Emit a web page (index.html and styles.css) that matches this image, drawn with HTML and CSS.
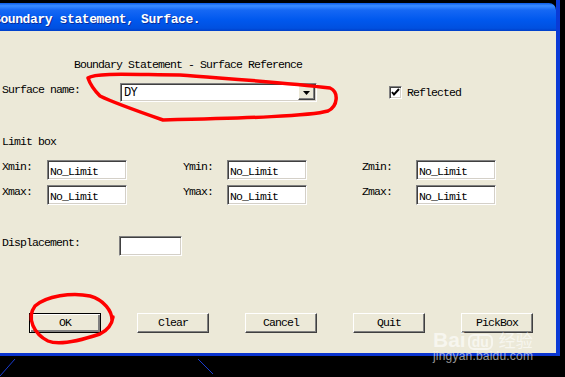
FILE: index.html
```html
<!DOCTYPE html>
<html lang="en">
<head>
    <meta charset="UTF-8">
    <meta name="viewport" content="width=device-width, initial-scale=1.0">
    <title>Boundary statement, Surface.</title>
    <link rel="stylesheet" href="styles.css">
</head>
<body>
    <div class="window">
        <div class="titlebar"><span class="title">Boundary statement, Surface.</span></div>

        <div class="dialog">
            <div class="heading">Boundary Statement - Surface Reference</div>

            <div class="surface-row">
                <span class="label surface-label">Surface name:</span>
                <div class="combo">
                    <span class="combo-text">DY</span>
                    <span class="combo-btn">
                        <svg width="7" height="4" viewBox="0 0 7 4"><path d="M0 0h7L3.5 4z" fill="#000"/></svg>
                    </span>
                </div>
                <div class="check">
                    <span class="check-box">
                        <svg width="9" height="9" viewBox="0 0 9 9"><path d="M1 4l2 2.5L8 1" fill="none" stroke="#000" stroke-width="2"/></svg>
                    </span>
                    <span>Reflected</span>
                </div>
            </div>

            <div class="section-label">Limit box</div>

            <div class="limits">
                <span class="label">Xmin:</span>
                <div class="field">No_Limit</div>
                <span class="label mid">Ymin:</span>
                <div class="field">No_Limit</div>
                <span class="label far">Zmin:</span>
                <div class="field">No_Limit</div>

                <span class="label">Xmax:</span>
                <div class="field">No_Limit</div>
                <span class="label mid">Ymax:</span>
                <div class="field">No_Limit</div>
                <span class="label far">Zmax:</span>
                <div class="field">No_Limit</div>
            </div>

            <div class="disp-row">
                <span class="label disp-label">Displacement:</span>
                <div class="field small"></div>
            </div>

            <div class="buttons">
                <div class="btn default">OK</div>
                <div class="btn">Clear</div>
                <div class="btn">Cancel</div>
                <div class="btn">Quit</div>
                <div class="btn">PickBox</div>
            </div>
        </div>
    </div>

    <!-- pen marks and desktop bits drawn over the capture -->
    <svg class="marks" width="565" height="377" viewBox="0 0 565 377">
        <path d="M198 359L213 374M0 376L15 359" stroke="#1a3cd0" stroke-width="1" fill="none"/>
        <path d="M88 78C96 72 140 75 180 75C230 79 282 82 330 88C339 92 338 106 328 111C310 116 250 118 163 120C140 112 112 102 100 96C94 90 90 84 88 78Z"
              fill="none" stroke="#ff0000" stroke-width="3.5" stroke-linejoin="round"/>
        <path d="M112 320C112 311 104 300 90 296C72 292 46 296 35 306C26 318 34 334 48 341C60 346 82 340 100 334C108 330 112 324 113 317"
              fill="none" stroke="#ff0000" stroke-width="3.5" stroke-linecap="round"/>
    </svg>

    <div class="watermark">
        <div class="wm-top"><span class="wm-bai">Bai</span><span class="wm-paw">du</span><span class="wm-cn">经验</span></div>
        <div class="wm-url">jingyan.baidu.com</div>
    </div>
</body>
</html>
```

FILE: styles.css
```css
body { margin: 0; background: #000; width: 565px; height: 377px; overflow: hidden; position: relative; }

.window { width: 556px; padding-top: 3px; border-right: 4px solid #0a3ad6; }
.titlebar {
    height: 28px; overflow: hidden; border-top-right-radius: 7px;
    background: linear-gradient(#0b5be6 0%, #3b8cff 10%, #1668f4 25%, #0058ee 60%, #0050e0 90%, #003ec8 100%);
}
.title {
    display: block; margin-left: -7px; padding-top: 6px;
    font: bold 13px/22px "Liberation Mono", monospace; letter-spacing: -0.4px;
    color: #fff; white-space: nowrap; text-shadow: 1px 1px 0 #0a2c9a;
}

.dialog {
    background: #ece9d8; height: 325px; box-sizing: border-box;
    padding: 27px 0 0 2px; border-bottom: 3px solid #0a34d0;
    font: 11.5px/13px "Liberation Mono", monospace; letter-spacing: -0.9px; color: #000;
    display: flex; flex-direction: column; align-items: flex-start;
}

.heading { margin-left: 72px; white-space: nowrap; }

.surface-row { display: flex; align-items: center; margin-top: 12px; }
.surface-label { width: 118px; align-self: flex-start; }
.combo {
    width: 197px; height: 19px; box-sizing: border-box; display: flex; background: #fff;
    border: 1px solid; border-color: #808080 #fff #fff #808080;
    box-shadow: inset 1px 1px #404040, inset -1px -1px #d4d0c8;
    padding: 1px;
}
.combo-text { flex: 1; padding: 2px 0 0 2px; font-size: 12px; letter-spacing: -0.8px; }
.combo-btn {
    width: 17px; display: flex; align-items: center; justify-content: center; background: #ece9d8;
    box-sizing: border-box; border: 1px solid; border-color: #fff #404040 #404040 #fff;
    box-shadow: inset -1px -1px #808080;
}
.check { display: flex; align-items: center; gap: 5px; margin-left: 72px; }
.check-box {
    width: 13px; height: 13px; box-sizing: border-box; background: #fff;
    display: flex; align-items: center; justify-content: center;
    border: 1px solid; border-color: #808080 #fff #fff #808080;
    box-shadow: inset 1px 1px #404040, inset -1px -1px #d4d0c8;
}

.section-label { margin-top: 33px; }

.limits {
    display: grid; margin-top: 12px; row-gap: 5px;
    grid-template-columns: 45px 80px 56px 44px 80px 55px 54px 80px;
    grid-auto-rows: 20px;
}
.label { white-space: nowrap; }
.mid { grid-column-start: 4; }
.far { grid-column-start: 7; }
.field {
    height: 20px; box-sizing: border-box; background: #fff; padding: 4px 0 0 2px;
    border: 1px solid; border-color: #808080 #fff #fff #808080;
    box-shadow: inset 1px 1px #404040, inset -1px -1px #d4d0c8;
    white-space: nowrap;
}
.field.small { width: 63px; }

.disp-row { display: flex; margin-top: 31px; }
.disp-label { width: 117px; }

.buttons { display: flex; gap: 36px; margin-top: 57px; margin-left: 27px; }
.btn {
    width: 72px; height: 20px; box-sizing: border-box; text-align: center; line-height: 18px;
    background: #ece9d8; border: 1px solid; border-color: #fff #404040 #404040 #fff;
    box-shadow: inset -1px -1px #808080;
}
.btn.default { border-color: #000; box-shadow: inset 1px 1px #fff, inset -2px -2px #808080; }

.marks { position: absolute; left: 0; top: 0; pointer-events: none; }

.watermark { position: absolute; left: 433px; top: 327px; color: rgba(255, 255, 255, 0.6); font-family: "Liberation Sans", sans-serif; }
.wm-top { display: flex; align-items: baseline; gap: 2px; }
.wm-bai { font-size: 21px; font-weight: bold; }
.wm-paw { font-size: 14px; font-weight: bold; padding: 0 2px; border-radius: 6px; border: 2px solid rgba(255, 255, 255, 0.6); line-height: 12px; }
.wm-cn { font-family: "Noto Sans CJK SC", sans-serif; font-size: 17px; margin-left: 4px; }
.wm-url { font-size: 12px; margin-top: -3px; letter-spacing: 0.2px; }
```
